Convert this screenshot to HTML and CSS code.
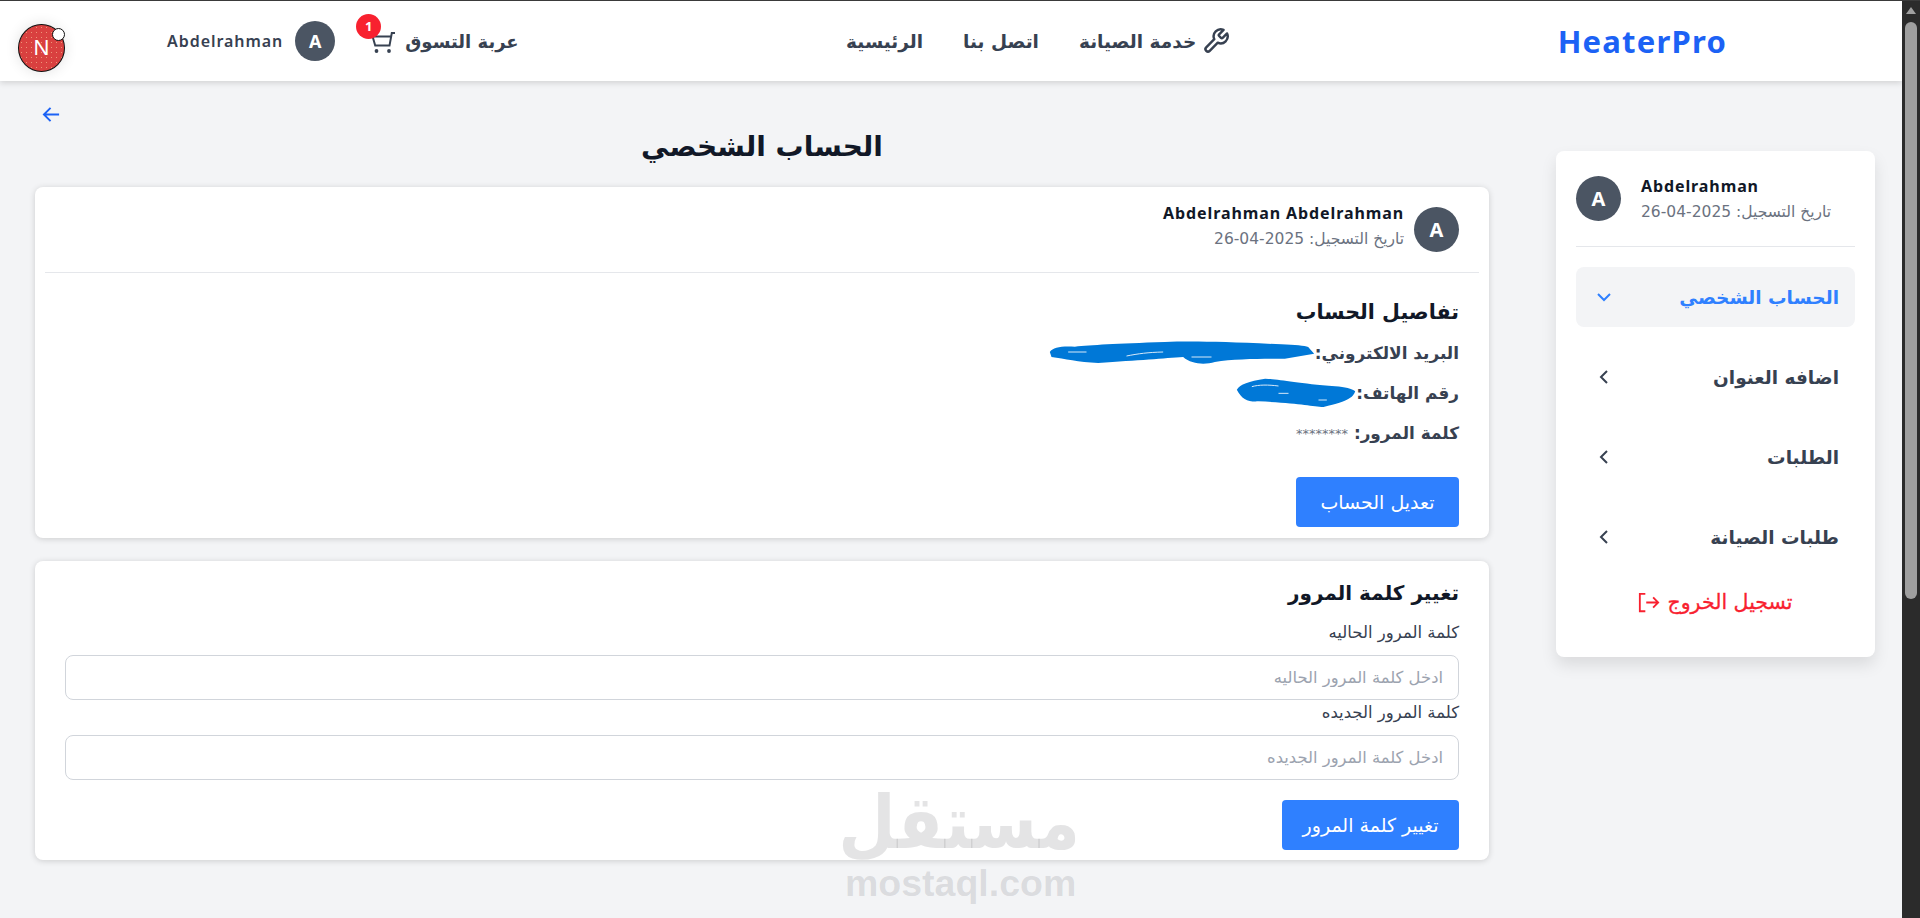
FILE: index.html
```html
<!DOCTYPE html>
<html lang="ar">
<head>
<meta charset="utf-8">
<title>HeaterPro</title>
<link rel="stylesheet" href="styles.css">
</head>
<body>
<div class="shell">
  <div class="page">
    <header class="topbar">
      <div class="logo">HeaterPro</div>
      <nav class="nav">
        <a class="nav-link">
          <svg class="wrench" viewBox="0 0 24 24"><path d="M14.7 6.3a1 1 0 0 0 0 1.4l1.6 1.6a1 1 0 0 0 1.4 0l3.77-3.77a6 6 0 0 1-7.94 7.94l-6.91 6.91a2.12 2.12 0 0 1-3-3l6.91-6.91a6 6 0 0 1 7.94-7.94l-3.76 3.76z"/></svg>
          <span>خدمة الصيانة</span>
        </a>
        <a class="nav-link">اتصل بنا</a>
        <a class="nav-link">الرئيسية</a>
      </nav>
      <div class="top-actions">
        <a class="cart">
          <span>عربة التسوق</span>
          <span class="cart-icon">
            <svg viewBox="0 0 26 24"><path d="M25 2h-3.2l-2.3 12.6H5.2L2.6 5.5H21"/><circle cx="6.5" cy="20" r="1.900"/><circle cx="19" cy="20" r="1.900"/></svg>
            <b class="badge">1</b>
          </span>
        </a>
        <div class="avatar avatar-sm">A</div>
        <span class="top-name">Abdelrahman</span>
      </div>
    </header>

    <div class="content">
      <aside class="sidebar">
        <div class="side-user">
          <div class="avatar">A</div>
          <div class="side-user-text">
            <div class="user-name">Abdelrahman</div>
            <div class="user-date">تاريخ التسجيل: 2025-04-26</div>
          </div>
        </div>
        <ul class="menu">
          <li class="menu-item active"><span>الحساب الشخصي</span><svg class="chev" viewBox="0 0 16 16"><path d="M2 5l6 6 6-6"/></svg></li>
          <li class="menu-item"><span>اضافه العنوان</span><svg class="chev" viewBox="0 0 16 16"><path d="M11 2L5 8l6 6"/></svg></li>
          <li class="menu-item"><span>الطلبات</span><svg class="chev" viewBox="0 0 16 16"><path d="M11 2L5 8l6 6"/></svg></li>
          <li class="menu-item"><span>طلبات الصيانة</span><svg class="chev" viewBox="0 0 16 16"><path d="M11 2L5 8l6 6"/></svg></li>
        </ul>
        <a class="logout">
          <span>تسجيل الخروج</span>
          <svg viewBox="0 0 24 22"><path d="M8 1.500H2v19h6M9 11h13M16.500 5.500L22 11l-5.500 5.500"/></svg>
        </a>
      </aside>

      <main class="main">
        <div class="back">
          <svg viewBox="0 0 20 20"><path d="M18 10H2M9 3l-7 7 7 7"/></svg>
        </div>
        <h1 class="page-title">الحساب الشخصي</h1>

        <section class="card card-account">
          <div class="card-head">
            <div class="avatar">A</div>
            <div class="head-text">
              <div class="user-name">Abdelrahman Abdelrahman</div>
              <div class="user-date">تاريخ التسجيل: 2025-04-26</div>
            </div>
          </div>
          <div class="details">
            <h2 class="card-title">تفاصيل الحساب</h2>
            <div class="row"><b>البريد الالكتروني:</b>
              <svg class="scribble scribble-mail" viewBox="0 0 800 75"><path d="M5 33C15 18 40 15 80 17C130 12 200 8 350 3C430 0 530 2 700 10C740 12 770 14 780 18L798 38L710 53C640 54 560 53 500 63C470 72 430 70 405 48C350 52 270 58 150 66C90 64 50 53 10 48Z"/><path class="speck" d="M60 33H115M235 45C270 38 300 34 345 33M430 48H490"/></svg>
            </div>
            <div class="row"><b>رقم الهاتف:</b>
              <svg class="scribble scribble-phone" viewBox="0 0 362 90"><path d="M5 35C15 18 40 10 90 2C130 3 180 15 300 25C330 27 350 32 360 40C355 55 345 70 265 87C230 85 190 75 70 70C40 72 20 65 5 35Z"/><path class="speck" d="M50 26C70 20 100 20 130 24M130 46H160M250 66H275"/></svg>
            </div>
            <div class="row"><b>كلمة المرور:</b><span class="stars">********</span></div>
          </div>
          <button class="btn btn-edit">تعديل الحساب</button>
        </section>

        <section class="card card-pass">
          <h2 class="card-title">تغيير كلمة المرور</h2>
          <label class="field-label">كلمة المرور الحاليه</label>
          <input class="field" placeholder="ادخل كلمة المرور الحاليه">
          <label class="field-label">كلمة المرور الجديده</label>
          <input class="field" placeholder="ادخل كلمة المرور الجديده">
          <button class="btn btn-pass">تغيير كلمة المرور</button>
        </section>
      </main>
    </div>

    <div class="watermark">
      <div class="wm-ar">مستقل</div>
      <div class="wm-en">mostaql.com</div>
    </div>

    <div class="next-badge">
      <span class="next-n">N</span>
      <span class="next-dot"></span>
    </div>
  </div>
  <div class="scrollbar">
    <div class="scroll-arrow"></div>
    <div class="scroll-thumb"></div>
  </div>
</div>
</body>
</html>
```
FILE: styles.css
```css
* { box-sizing: border-box; }
html, body { margin: 0; height: 100%; overflow: hidden; }
body {
  background: #f3f4f6;
  font-family: "DejaVu Sans", "Noto Sans", sans-serif;
  color: #111827;
  border-top: 1px solid #3a3a3a;
}
.shell { display: flex; height: 917px; }
.page { position: relative; flex: 1; min-width: 0; overflow: hidden; }

.scrollbar { width: 18px; background: #2b2b2b; padding: 2px 3px 0; flex: none; }
.scroll-arrow { width: 0; height: 0; margin: 4px auto 8px; border: 5px solid transparent; border-top: 0; border-bottom: 7px solid #a0a0a0; }
.scroll-thumb { width: 12px; height: 577px; background: #9f9f9f; border-radius: 6px; }

.topbar {
  height: 80px;
  background: #fff;
  box-shadow: 0 2px 6px rgba(0,0,0,.14);
  display: flex;
  flex-direction: row-reverse;
  justify-content: space-between;
  align-items: center;
  padding: 0 175px 0 167px;
  position: relative;
}
.logo { font-family: "Noto Sans", sans-serif; font-size: 31px; font-weight: 700; color: #1c62f5; letter-spacing: 1.2px; direction: ltr; }
.nav { display: flex; flex-direction: row; gap: 40px; align-items: center; direction: rtl; }
.nav-link { display: flex; align-items: center; gap: 6px; font-size: 18.500px; font-weight: 700; color: #374151; }
.wrench { width: 28px; height: 28px; fill: none; stroke: #374151; stroke-width: 2.100; stroke-linejoin: round; }
.top-actions { display: flex; align-items: center; direction: rtl; }
.cart { display: flex; align-items: center; gap: 9px; font-size: 18px; font-weight: 700; color: #374151; }
.cart-icon { position: relative; display: block; width: 26px; height: 24px; margin-top: 3px; }
.cart-icon svg { display: block; width: 26px; height: 24px; fill: none; stroke: #374151; stroke-width: 2; }
.cart-icon circle { fill: #374151; stroke: none; }
.badge {
  position: absolute; top: -17px; right: 15px;
  width: 25px; height: 25px; border-radius: 50%;
  background: #f8212f; color: #fff; font: 700 13px/25px "Noto Sans", sans-serif; text-align: center;
}
.avatar {
  width: 45px; height: 45px; border-radius: 50%; flex: none;
  background: #4b5563; color: #fff; font: 700 20px "Noto Sans", sans-serif;
  display: flex; align-items: center; justify-content: center;
}
.avatar-sm { width: 40px; height: 40px; font-size: 18px; margin: 0 35px 0 12px; }
.top-name { font-family: "Noto Sans", sans-serif; font-size: 16px; font-weight: 600; color: #374151; letter-spacing: .95px; }

.content {
  display: flex;
  flex-direction: row-reverse;
  gap: 67px;
  padding: 0 27px 0 35px;
  align-items: flex-start;
}
.sidebar {
  width: 319px; flex: none;
  margin-top: 70px;
  height: 506px;
  background: #fff;
  border-radius: 8px;
  box-shadow: 0 8px 16px rgba(0,0,0,.1);
  padding: 25px 20px 20px;
}
.side-user { display: flex; gap: 20px; align-items: center; padding-bottom: 25px; border-bottom: 1px solid #e5e7eb; height: 71px; }
.side-user-text { direction: ltr; margin-top: 3px; }
.user-name { font-family: "Noto Sans", sans-serif; font-size: 16px; font-weight: 700; color: #111827; letter-spacing: .9px; line-height: 22px; }
.user-date { font-size: 15.500px; color: #6b7280; line-height: 26px; margin-top: 2px; direction: rtl; }
.menu { list-style: none; margin: 20px 0 0; padding: 0; display: flex; flex-direction: column; gap: 20px; }
.menu-item {
  height: 60px; padding: 0 16px 0 20px; border-radius: 8px;
  display: flex; align-items: center; justify-content: space-between; direction: rtl;
  font-size: 18.500px; font-weight: 700; color: #374151;
}
.menu-item.active { background: #f3f4f6; color: #2f80ff; }
.chev { width: 16px; height: 16px; fill: none; stroke: currentColor; stroke-width: 2; }
.logout {
  display: flex; justify-content: center; align-items: center; gap: 7px; direction: rtl;
  margin-top: 10px; height: 50px; color: #f8212f; font-size: 20.500px; font-weight: 400;
  -webkit-text-stroke: .3px #f8212f;
}
.logout svg { width: 22px; height: 21px; fill: none; stroke: currentColor; stroke-width: 2; }

.main { flex: 1; min-width: 0; }
.back { height: 17px; margin-top: 24px; display: flex; }
.back svg { width: 19px; height: 19px; margin-left: 7px; fill: none; stroke: #1c62f5; stroke-width: 2; }
.page-title { margin: 0; height: 56px; text-align: center; font-size: 28px; font-weight: 700; line-height: 50px; color: #111827; }
.card { background: #fff; border-radius: 8px; box-shadow: 0 1px 6px rgba(0,0,0,.16); direction: rtl; }
.card-account { height: 351px; margin-top: 9px; padding: 15px 10px 10px; }
.card-head { display: flex; gap: 10px; align-items: center; padding: 0 20px 0 0; height: 55px; }
.head-text { margin-top: -6px; }
.details { border-top: 1px solid #e5e7eb; margin-top: 15px; padding: 22px 20px 0; }
.card-title { margin: 0; font-size: 20px; font-weight: 700; line-height: 34px; color: #111827; }
.details .card-title { font-size: 20.600px; }
.row { display: flex; align-items: center; height: 40px; font-size: 16.900px; }
.row b { font-weight: 700; color: #374151; }
.details .card-title + .row { margin-top: 4px; }
.stars { color: #6b7280; margin-right: 6px; font-size: 13px; }
.scribble { fill: #0078d7; display: block; }
.speck { fill: none; stroke: #d7e9f9; stroke-width: 3; }
.scribble-mail { width: 267px; height: 25px; }
.scribble-phone { width: 121px; height: 30px; }
.btn { border: 0; border-radius: 4px; background: #2f80ff; color: #fff; font: 400 19px "DejaVu Sans", sans-serif; height: 50px; display: block; }
.btn-edit { width: 163px; margin: 24px 20px 0 0; }
.card-pass { height: 299px; margin-top: 23px; padding: 15px 30px 0; }
.field-label { display: block; font-size: 16.500px; line-height: 24px; color: #374151; }
.card-pass .card-title + .field-label { margin-top: 11px; }
.field {
  display: block; width: 100%; height: 45px; margin: 10px 0 1px; direction: rtl;
  border: 1px solid #d1d5db; border-radius: 8px; padding: 0 15px; background: #fff;
  font: 400 16.400px "DejaVu Sans", sans-serif;
}
.field::placeholder { color: #9ca3af; }
.btn-pass { width: 177px; margin-top: 20px; }

.watermark { position: absolute; left: 845px; top: 790px; width: 230px; text-align: center; color: rgba(120,120,125,.2); pointer-events: none; }
.wm-ar { font: 700 76px/74px "DejaVu Sans", sans-serif; direction: rtl; transform: translate(20px, -5px) scale(.87, .97); }
.wm-en { font: 700 37.500px/36px "Liberation Sans", sans-serif; }

.next-badge {
  position: absolute; left: 18px; top: 23px; width: 47px; height: 48px;
  border-radius: 50%; background-color: #d9403f; border: 1px solid #111;
  background-image: radial-gradient(circle, rgba(255,220,170,.55) .7px, transparent 1px);
  background-size: 5px 5px;
  box-shadow: 0 0 14px rgba(0,0,0,.12);
  display: flex; align-items: center; justify-content: center;
}
.next-n { color: #fff; font: 400 22px "Liberation Sans", sans-serif; }
.next-dot { position: absolute; right: -1px; top: 3px; width: 13px; height: 13px; border-radius: 50%; background: #fff; border: 1px solid #111; }
```
